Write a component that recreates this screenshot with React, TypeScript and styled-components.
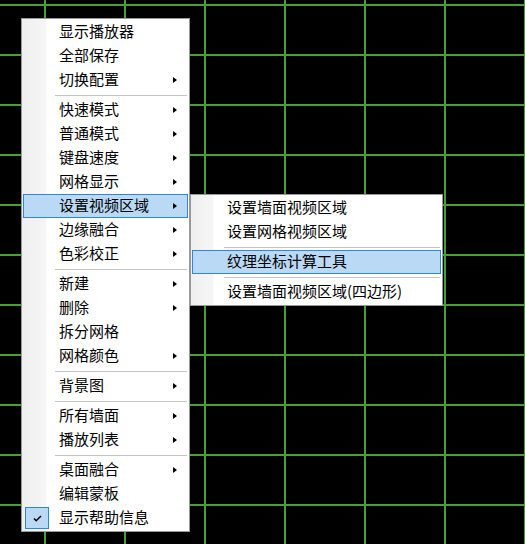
import React from "react";
import styled, { createGlobalStyle } from "styled-components";

const GlobalStyle = createGlobalStyle`
  html, body { margin: 0; padding: 0; background: #000; }
  body { font-family: "Noto Sans CJK SC", "Noto Sans", sans-serif; }
`;

const Canvas = styled.div`
  position: relative;
  width: 525px;
  height: 544px;
  overflow: hidden;
  background-color: #000;
  background-image:
    linear-gradient(to right, transparent 44px, #46a032 44px, #46a032 46px, transparent 46px),
    linear-gradient(to bottom, transparent 4px, #46a032 4px, #46a032 6px, transparent 6px);
  background-size: 80px 100%, 100% 50px;
  background-repeat: repeat-x, repeat-y;
`;

const Menu = styled.div<{ $left: number; $top: number; $width: number; $gutter: number }>`
  position: absolute;
  left: ${(p) => p.$left}px;
  top: ${(p) => p.$top}px;
  width: ${(p) => p.$width}px;
  box-sizing: border-box;
  border: 1px solid #999;
  padding: 1px;
  display: flex;
  flex-direction: column;
  background: linear-gradient(
    to right,
    #efefef 0,
    #f6f6f6 ${(p) => p.$gutter - 1}px,
    #fff ${(p) => p.$gutter}px,
    #fff 100%
  );
`;

const Item = styled.div<{ $active?: boolean; $indent: number }>`
  position: relative;
  box-sizing: border-box;
  height: 24px;
  display: flex;
  align-items: center;
  padding-left: ${(p) => p.$indent}px;
  padding-right: 10px;
  font-size: 15px;
  color: #000;
  white-space: nowrap;
  border: 1px solid ${(p) => (p.$active ? "#2f86d8" : "transparent")};
  background: ${(p) => (p.$active ? "#b9d9f5" : "transparent")};
`;

const Label = styled.span`
  flex: 1;
  line-height: 22px;
  margin-left: -1px;
  margin-top: -2px;
`;

const Arrow = styled.span`
  width: 0;
  height: 0;
  border-left: 4px solid #000;
  border-top: 3.5px solid transparent;
  border-bottom: 3.5px solid transparent;
`;

const Separator = styled.div`
  height: 6px;
  display: flex;
  align-items: center;
  padding-left: 32px;
  padding-right: 1px;
  &::after {
    content: "";
    flex: 1;
    height: 1px;
    background: #c5c5c5;
  }
`;

const CheckBox = styled.span`
  position: absolute;
  left: 1px;
  top: 0px;
  width: 24px;
  height: 22px;
  box-sizing: border-box;
  border: 1px solid #2f86d8;
  background: #b9d9f5;
  display: flex;
  align-items: center;
  justify-content: center;
`;

type Entry =
  | { sep: true }
  | { sep?: false; label: string; arrow?: boolean; active?: boolean; checked?: boolean };

const mainItems: Entry[] = [
  { label: "显示播放器" },
  { label: "全部保存" },
  { label: "切换配置", arrow: true },
  { sep: true },
  { label: "快速模式", arrow: true },
  { label: "普通模式", arrow: true },
  { label: "键盘速度", arrow: true },
  { label: "网格显示", arrow: true },
  { label: "设置视频区域", arrow: true, active: true },
  { label: "边缘融合", arrow: true },
  { label: "色彩校正", arrow: true },
  { sep: true },
  { label: "新建", arrow: true },
  { label: "删除", arrow: true },
  { label: "拆分网格" },
  { label: "网格颜色", arrow: true },
  { sep: true },
  { label: "背景图", arrow: true },
  { sep: true },
  { label: "所有墙面", arrow: true },
  { label: "播放列表", arrow: true },
  { sep: true },
  { label: "桌面融合", arrow: true },
  { label: "编辑蒙板" },
  { label: "显示帮助信息", checked: true },
];

const subItems: Entry[] = [
  { label: "设置墙面视频区域" },
  { label: "设置网格视频区域" },
  { sep: true },
  { label: "纹理坐标计算工具", active: true },
  { sep: true },
  { label: "设置墙面视频区域(四边形)" },
];

const CheckMark = () => (
  <svg width="9" height="7" viewBox="0 0 9 7">
    <polyline points="1,3.5 3.2,5.7 8,1" fill="none" stroke="#000" strokeWidth="1.5" />
  </svg>
);

const MenuList = ({ items, indent }: { items: Entry[]; indent: number }) => (
  <>
    {items.map((it, i) =>
      it.sep ? (
        <Separator key={i} />
      ) : (
        <Item key={i} $active={it.active} $indent={indent}>
          {it.checked && (
            <CheckBox>
              <CheckMark />
            </CheckBox>
          )}
          <Label>{it.label}</Label>
          {it.arrow && <Arrow />}
        </Item>
      )
    )}
  </>
);

export default function App() {
  return (
    <>
      <GlobalStyle />
      <Canvas>
        <Menu $left={21} $top={18} $width={169} $gutter={25}>
          <MenuList items={mainItems} indent={36} />
        </Menu>
        <Menu $left={190} $top={194} $width={253} $gutter={23}>
          <MenuList items={subItems} indent={35} />
        </Menu>
      </Canvas>
    </>
  );
}
